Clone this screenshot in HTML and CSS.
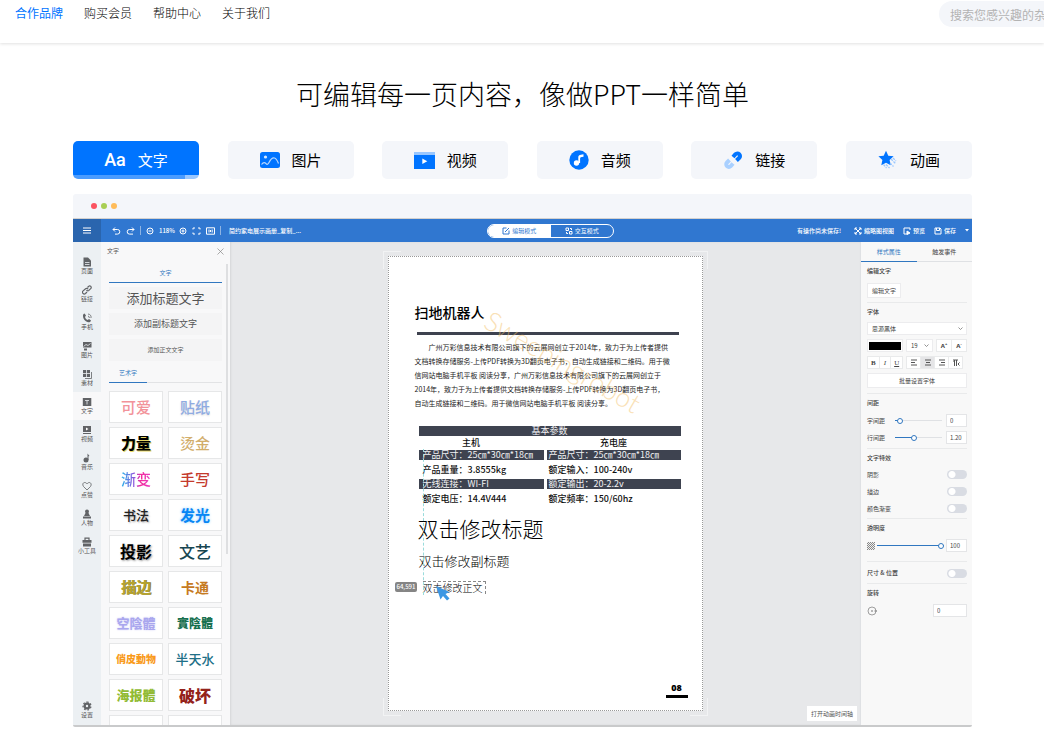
FILE: index.html
```html
<!DOCTYPE html>
<html lang="zh-CN">
<head>
<meta charset="utf-8">
<title>可编辑每一页内容</title>
<link rel="stylesheet" href="styles.css">
</head>
<body>
<header class="site-header">
  <nav class="site-nav">
    <a class="current" href="#">合作品牌</a>
    <a href="#">购买会员</a>
    <a href="#">帮助中心</a>
    <a href="#">关于我们</a>
  </nav>
  <input class="search" type="search" aria-label="搜索" placeholder="搜索您感兴趣的杂志">
</header>

<main class="feature">
  <h1>可编辑每一页内容，像做PPT一样简单</h1>

  <div class="tabs">
    <button class="tab active" type="button"><span class="aa">Aa</span>文字</button>
    <button class="tab" type="button">
      <svg width="20" height="16" viewBox="0 0 20 16"><rect width="20" height="16" rx="2.5" fill="#0074ff"/><circle cx="5.500" cy="5" r="1.600" fill="#d5e8ff"/><path d="M1.500 12.500c2-2.500 3.500-2 4.500-.8s2 .8 3-1.200c2-4 3.500-5 5.500-4.500s3 3 4 5.500" fill="none" stroke="#b5d7ff" stroke-width="1.200"/></svg>图片</button>
    <button class="tab" type="button">
      <svg width="21" height="17" viewBox="0 0 21 17"><path fill="#0074ff" d="M0 3h21v14H0z"/><path fill="#99c7ff" d="M0 0h21v3H0z"/><path fill="#fff" d="M8.300 6.500l5 2.800-5 2.800z"/></svg>视频</button>
    <button class="tab" type="button">
      <svg width="20" height="20" viewBox="0 0 20 20"><circle cx="10" cy="10" r="9.700" fill="#0074ff"/><circle cx="7.500" cy="13" r="2.700" fill="#fff"/><path d="M9.300 13V7.500c0-2 1-2.700 5.200-3.300v2.600c-2.500.2-3.400.6-3.400 1.700V13z" fill="#fff"/></svg>音频</button>
    <button class="tab" type="button">
      <svg width="20" height="20" viewBox="0 0 20 20"><g fill="none" stroke-width="4"><path d="M10 7l2.500-2.800a2.500 2.500 0 0 1 3.800 3.600L13.500 10.500" stroke="#0074ff"/><path d="M6.500 10L4 12.500a2.500 2.500 0 0 0 3.700 3.700L10 13.500" stroke="#a9d0ff"/></g></svg>链接</button>
    <button class="tab" type="button">
      <svg width="20" height="20" viewBox="0 0 20 20"><path fill="#0074ff" d="M8 .8l2.300 4.900 5.300.6-4 3.700 1.100 5.300L8 12.700l-4.700 2.600L4.400 10l-4-3.700 5.300-.6z"/><path d="M13 9l4.500 4.500M15 8l3 3M8 14.500l3.500 3.500M5.500 14.500l3 3.500M12 13l3.500 3.500" stroke="#99c7ff" stroke-width="1.200" stroke-dasharray="2.500 1"/></svg>动画</button>
  </div>

  <section class="editor">
    <div class="window-bar"><i class="red"></i><i class="green"></i><i class="amber"></i></div>

    <div class="toolbar">
      <button class="menu" type="button" aria-label="菜单"><svg width="8" height="7" viewBox="0 0 8 7"><path d="M0 1h8M0 3.500h8M0 6h8" stroke="#fff"/></svg></button>
      <div class="tools">
        <svg width="9" height="8" viewBox="0 0 9 8"><path d="M3 .5L1 2.500l2 2M1 2.500h4.500a2.300 2.300 0 0 1 0 4.600H3"/></svg>
        <svg width="9" height="8" viewBox="0 0 9 8"><path d="M6 .5l2 2-2 2M8 2.500H3.500a2.300 2.300 0 0 0 0 4.600H7"/></svg>
        <span class="sep"></span>
        <svg width="8" height="8" viewBox="0 0 8 8"><circle cx="4" cy="4" r="3"/><path d="M2.500 4h3"/></svg>
        <span class="zoom">118%</span>
        <svg width="8" height="8" viewBox="0 0 8 8"><circle cx="4" cy="4" r="3"/><path d="M2.500 4h3M4 2.500v3"/></svg>
        <svg width="9" height="8" viewBox="0 0 9 8"><path d="M1 2.500V1h2M6 1h2v1.500M8 5.500V7H6M3 7H1V5.500"/></svg>
        <svg width="9" height="8" viewBox="0 0 9 8"><path d="M.5.800h8v6.400h-8zM3 2.500v3M4.500 3v2M6.200 2.500v3"/></svg>
        <span class="sep"></span>
        <span class="file">简约家电展示画册_复制_...</span>
      </div>
      <div class="modes">
        <button class="mode on" type="button"><svg width="8" height="8" viewBox="0 0 8 8"><path d="M4.500 1H1v6h6V3.500M3 5l4-4"/></svg>编辑模式</button>
        <button class="mode" type="button"><svg width="8" height="8" viewBox="0 0 8 8"><path d="M1 1h2.500v2.500H1zM4.500 4.500H7V7H4.500zM5 1.500h1.500V3M1.500 5v1.500H3"/></svg>交互模式</button>
      </div>
      <div class="actions">
        <span class="unsaved">有操作尚未保存!</span>
        <button type="button"><svg width="8" height="8" viewBox="0 0 8 8"><path d="M1 3V1h2M5 1h2v2M7 5v2H5M3 7H1V5M1 1l6 6M7 1L1 7"/></svg>缩略图视图</button>
        <button type="button"><svg width="8" height="8" viewBox="0 0 8 8"><path d="M4 7H1V1h6v2"/><path d="M4 4l3 2-3 1.500z" fill="#fff"/></svg>预览</button>
        <button type="button"><svg width="8" height="8" viewBox="0 0 8 8"><path d="M1 1h5l1 1v5H1zM2.500 1v2.500h3V1"/></svg>保存</button>
        <svg class="caret" width="4" height="3" viewBox="0 0 4 3"><path d="M0 0h4L2 2.500z"/></svg>
      </div>
    </div>

    <div class="workspace">
      <nav class="rail">
        <a href="#"><svg viewBox="0 0 10 10"><path d="M1.500.5H6L9 3.500v6H1.500z"/><path class="cut" d="M3 5.500h4.500M3 7.500h4.500"/></svg>页面</a>
        <a href="#"><svg viewBox="0 0 10 10"><path class="line" d="M5 7L3.500 8.500a1.700 1.700 0 0 1-2.400-2.600l2.500-2.200c.8-.7 2-.5 2.500.5M4.500 5c.6 1 1.700 1 2.400.4l2-2A1.500 1.500 0 0 0 6.500 1.500L5.500 2.500"/></svg>链接</a>
        <a href="#"><svg viewBox="0 0 10 10"><path d="M2.500.5l1.500 2-1 1.500c.5 1.500 1.300 2.500 2.700 3L7 6l2 1.500c-.3 1.500-1.500 2-3 1.700C3 8.500.8 5.500 1 2.500c0-1 .7-1.800 1.500-2z"/><path class="line thin" d="M6 1a3.500 3.500 0 0 1 3 4M6 3a1.800 1.800 0 0 1 1.300 2"/></svg>手机</a>
        <a href="#"><svg viewBox="0 0 10 10"><path d="M1 1h8.500v5.500H1zM2 7.500h3v2H2z"/><path class="cut" d="M1.500 5.500L4 3.500l2 1 2.500-2"/></svg>图片</a>
        <a href="#"><svg viewBox="0 0 10 10"><path d="M1 1h7v7H1z"/><path class="cut" d="M4.500 1v7M1 4.500h7"/><path class="line thin" d="M9.500 3v6.500H3"/></svg>素材</a>
        <a class="active" href="#"><svg viewBox="0 0 10 10"><path d="M.8 1h8.500v8H.8z"/><path class="cut" d="M3 3.500h4M5 3.500v4"/></svg>文字</a>
        <a href="#"><svg viewBox="0 0 10 10"><path d="M1 1h8v6H1zM1 8h8v1H1z"/><path fill="#fff" d="M4 2.500L6.500 4 4 5.500z"/></svg>视频</a>
        <a href="#"><svg viewBox="0 0 10 10"><circle cx="4" cy="7" r="2.500"/><path d="M5.500 7V.5l2 2.500-1 .2V7z"/></svg>音乐</a>
        <a href="#"><svg viewBox="0 0 10 10"><path class="line thin" d="M5 9L1.500 5.500C0 3.500 1 1.500 2.700 1.500S5 3 5 3s.8-1.500 2.300-1.500S10 3.500 8.500 5.500z"/></svg>点赞</a>
        <a href="#"><svg viewBox="0 0 10 10"><circle cx="5" cy="2.500" r="2"/><path d="M3.500 4h3L8 7H2zM1 7.500h8v2H1z"/></svg>人物</a>
        <a href="#"><svg viewBox="0 0 10 10"><path d="M.5 3h9v2.700h-9zM1 6.500h8v3H1z"/><path class="line" d="M3 3V1.200h4V3"/></svg>小工具</a>
        <a class="settings" href="#"><svg viewBox="0 0 10 10"><circle cx="5" cy="5" r="3.500"/><path class="line" stroke-dasharray="1.700 1.700" stroke-width="2" d="M5 1a4 4 0 1 1 0 8 4 4 0 1 1 0-8"/><circle cx="5" cy="5" r="1.200" fill="#ecf0f3"/></svg>设置</a>
      </nav>

      <aside class="text-panel">
        <div class="panel-head">文字<button type="button" aria-label="关闭"><svg width="7" height="7" viewBox="0 0 7 7"><path d="M.5.500l6 6M6.500.500l-6 6" stroke="#888" stroke-width=".7"/></svg></button></div>
        <div class="panel-scroll">
          <h2 class="panel-tab">文字</h2>
          <button class="add title" type="button">添加标题文字</button>
          <button class="add subtitle" type="button">添加副标题文字</button>
          <button class="add body" type="button">添加正文文字</button>
          <h2 class="art-tab"><span>艺术字</span></h2>
          <div class="art-grid">
            <button class="pink" type="button">可爱</button><button class="sticker" type="button">贴纸</button>
            <button class="power" type="button">力量</button><button class="gold" type="button">烫金</button>
            <button class="gradient" type="button"><span>渐变</span></button><button class="hand" type="button">手写</button>
            <button class="brush" type="button">书法</button><button class="glow" type="button">发光</button>
            <button class="shadow" type="button">投影</button><button class="literary" type="button">文艺</button>
            <button class="outline" type="button">描边</button><button class="cartoon" type="button">卡通</button>
            <button class="hollow" type="button">空陰體</button><button class="solid" type="button">實陰體</button>
            <button class="animal" type="button">俏皮動物</button><button class="water" type="button">半天水</button>
            <button class="poster" type="button">海报體</button><button class="broken" type="button">破坏</button>
            <button class="ice" type="button">冰雪體</button><button class="wood" type="button">古木體</button>
          </div>
        </div>
      </aside>

      <div class="canvas">
        <div class="page-frame">
          <i class="corner tl"></i><i class="corner tr"></i><i class="corner bl"></i><i class="corner br"></i>
          <article class="page">
            <h2 class="doc-title">扫地机器人</h2>
            <hr class="rule">
            <p class="doc-text"><span class="indent">广州万彩信息技术有限公司旗下的云展网创立于2014年，致力于为上传者提供</span><br>文档转换存储服务-上传PDF转换为3D翻页电子书，自动生成链接和二维码。用于微<br>信网站电脑手机平板 阅读分享，广州万彩信息技术有限公司旗下的云展网创立于<br>2014年，致力于为上传者提供文档转换存储服务-上传PDF转换为3D翻页电子书，<br>自动生成链接和二维码。用于微信网站电脑手机平板 阅读分享。</p>
            <table class="specs">
              <colgroup><col class="host"><col class="gap"><col></colgroup>
              <thead><tr class="dark"><th colspan="3">基本参数</th></tr>
              <tr class="heads"><th>主机</th><td class="gutter"></td><th>充电座</th></tr></thead>
              <tbody>
              <tr class="dark"><td>产品尺寸：25㎝*30㎝*18㎝</td><td class="gutter"></td><td>产品尺寸：25㎝*30㎝*18㎝</td></tr>
              <tr class="plain"><td>产品重量：3.8555kg</td><td class="gutter"></td><td>额定输入：100-240v</td></tr>
              <tr class="dark"><td>无线连接：WI-FI</td><td class="gutter"></td><td>额定输出：20-2.2v</td></tr>
              <tr class="plain"><td>额定电压：14.4V444</td><td class="gutter"></td><td>额定频率：150/60hz</td></tr>
              </tbody>
            </table>
            <p class="new-title">双击修改标题</p>
            <p class="new-subtitle">双击修改副标题</p>
            <p class="new-body">双击修改正文</p>
            <div class="folio">08</div>
            <span class="watermark">Sweepingrobot</span>
            <i class="guide"></i>
            <span class="coords">64,591</span>
            <svg class="cursor" width="15" height="16" viewBox="0 0 15 16"><path fill="#3d97e3" d="M0 0l13.500 6-4 2 4 4.500-2.500 2-4-4.500-2.500 3.500z"/></svg>
          </article>
        </div>
        <button class="timeline" type="button">打开动画时间轴</button>
      </div>

      <aside class="props">
        <div class="prop-tabs"><button class="on" type="button">样式属性</button><button type="button">触发事件</button></div>
        <section class="group">
          <h3>编辑文字</h3>
          <button class="edit-text" type="button">编辑文字</button>
        </section>
        <section class="group type">
          <h3>字体</h3>
          <div class="stack">
            <select aria-label="字体"><option>思源黑体</option></select>
            <div class="row"><button class="swatch" type="button" aria-label="颜色"><i></i></button>
              <select class="size" aria-label="字号"><option>19</option></select>
              <div class="set two"><button type="button">A<sup>+</sup></button><button type="button">A<sup>-</sup></button></div></div>
            <div class="row"><div class="set biu"><button type="button"><b>B</b></button><button type="button"><em>I</em></button><button type="button"><u>U</u></button></div>
              <div class="set align">
                <button type="button" aria-label="左对齐"><svg width="6" height="7" viewBox="0 0 6 7"><path d="M0 1h6M0 3.500h4M0 6h6"/></svg></button>
                <button class="on" type="button" aria-label="居中"><svg width="6" height="7" viewBox="0 0 6 7"><path d="M0 1h6M1 3.500h4M0 6h6"/></svg></button>
                <button type="button" aria-label="右对齐"><svg width="6" height="7" viewBox="0 0 6 7"><path d="M0 1h6M2 3.500h4M0 6h6"/></svg></button>
                <button type="button" aria-label="段落"><svg width="8" height="7" viewBox="0 0 8 7"><path d="M2.500 1v6M4.500 1v6M1 1h5M1.500 2.500h1M7.500 3.500L6 5l1.500 1.500"/></svg></button></div></div>
            <button class="batch" type="button">批量设置字体</button>
          </div>
        </section>
        <section class="group">
          <h3>间距</h3>
          <div class="field"><label for="letter">字间距</label><input class="range r10" id="letter" type="range" value="5"><input type="text" aria-label="字间距数值" value="0"></div>
          <div class="field"><label for="leading">行间距</label><input class="range r40" id="leading" type="range" value="38"><input type="text" aria-label="行间距数值" value="1.20"></div>
        </section>
        <section class="group effects">
          <h3>文字特效</h3>
          <label class="switch">阴影<input type="checkbox"></label>
          <label class="switch">描边<input type="checkbox"></label>
          <label class="switch">颜色渐变<input type="checkbox"></label>
        </section>
        <section class="group opacity">
          <h3>透明度</h3>
          <div class="field"><i class="checker"></i><input class="range r100" type="range" aria-label="透明度" value="100"><input type="text" aria-label="透明度数值" value="100"></div>
        </section>
        <section class="group">
          <label class="switch strong">尺寸 &amp; 位置<input type="checkbox"></label>
        </section>
        <section class="group">
          <h3>旋转</h3>
          <div class="rotate"><svg width="10" height="10" viewBox="0 0 10 10"><circle cx="5" cy="5" r="4" fill="none" stroke="#888" stroke-width=".8"/><path d="M4 4.500h2v1H4zM7.500 4.500h2.500v1H7.500z" fill="#777"/></svg><input type="text" aria-label="旋转角度" value="0"></div>
        </section>
      </aside>
    </div>
  </section>
</main>
</body>
</html>
```
FILE: styles.css
```css
* { box-sizing: border-box; }
body {
  margin: 0;
  background: #fff;
  color: #333;
  font: 12px/16px "Noto Sans CJK SC", sans-serif;
}
button, input, select { font: inherit; color: inherit; margin: 0; }
button { border: 0; padding: 0; background: none; white-space: nowrap; }
a { color: inherit; text-decoration: none; }
h1, h2, h3, p { margin: 0; font-weight: 400; }
svg { display: block; flex: none; }

/* Header */
.site-header {
  display: grid;
  grid-template-columns: 1fr 105px;
  height: 43px;
  overflow-x: clip;
  box-shadow: 0 1px 3px rgba(0, 0, 0, .12);
}
.site-nav { display: flex; gap: 21px; padding: 5px 15px; font-weight: 300; color: #000; }
.site-nav .current { color: #0074ff; font-weight: 400; }
.search {
  width: 220px;
  height: 26px;
  margin-top: 1px;
  padding: 0 11px;
  border: 0;
  border-radius: 13px;
  background: #f4f6fa;
}
.search::placeholder { color: #b3b3b3; }

/* Feature */
.feature { padding: 0 72px 0 73px; }
h1 {
  padding: 31px 0 27px;
  font-size: 27px;
  line-height: 40px;
  font-weight: 300;
  color: #000;
  text-align: center;
}
.tabs { display: flex; justify-content: space-between; }
.tab {
  display: flex;
  align-items: center;
  justify-content: center;
  gap: 12px;
  width: 126px;
  height: 38px;
  border-radius: 5px;
  background: #f4f6fa;
  color: #000;
  font-size: 15px;
}
.tab.active {
  color: #fff;
  background: linear-gradient(90deg, #4a9cff 112px, #99c7ff 112px) bottom / 100% 4px no-repeat #0074ff;
}
.aa { font: 500 18px/20px Roboto, sans-serif; }

/* Editor window */
.editor {
  margin-top: 15px;
  border-bottom: 2px solid #c9cacb;
  border-radius: 3px 3px 2px 2px;
  overflow: hidden;
  font-size: 6px;
  line-height: 8px;
}
.window-bar { display: flex; align-items: center; gap: 4px; height: 25px; padding-left: 18px; background: #f4f6fa; border-bottom: 1px solid #d3d1cf; }
.window-bar i { width: 6px; height: 6px; border-radius: 50%; }
.red { background: #fb5361; }
.green { background: #a9cf54; }
.amber { background: #ffbc5a; }

.toolbar {
  display: grid;
  grid-template-columns: 28px 386px 127px 1fr;
  align-items: center;
  height: 23px;
  background: #3077d0;
  color: #fff;
}
.toolbar svg { fill: none; stroke: currentColor; stroke-width: 1; }
.toolbar .caret { fill: #fff; stroke: none; }
.menu { display: grid; place-items: center; height: 23px; background: #2a65ae; }
.tools { display: flex; align-items: center; gap: 5px; padding-left: 11px; }
.sep { width: 1px; height: 9px; background: #8fb4e2; }
.zoom { width: 15px; font-weight: 500; }
.file { margin-left: 3px; font-weight: 500; }
.modes { display: grid; grid-template-columns: 1fr 1fr; height: 14px; border: 1px solid #fff; border-radius: 7px; overflow: hidden; }
.mode { display: flex; align-items: center; justify-content: center; gap: 2px; }
.mode.on { background: #fff; color: #3077d0; }
.actions { display: flex; align-items: center; justify-content: flex-end; gap: 9px; padding-right: 3px; font-weight: 500; }
.actions button { display: flex; align-items: center; gap: 2px; }
.unsaved { margin-right: 4px; }

.workspace { display: grid; grid-template-columns: 28px 129px 1fr 112px; background: #e7e8ea; }

/* Icon rail */
.rail { display: flex; flex-direction: column; padding: 10px 0 1px; background: #ecf0f3; color: #555; }
.rail a { display: flex; flex-direction: column; align-items: center; height: 28px; padding-top: 5px; }
.rail svg { width: 10px; height: 10px; fill: #616366; }
.rail .line { fill: none; stroke: #616366; stroke-width: 1.2; }
.rail .thin { stroke-width: .8; }
.rail .cut { fill: none; stroke: #ecf0f3; stroke-width: .8; }
.rail .active { background: #f8f8f9; }
.rail .settings { margin-top: auto; }

/* Text panel */
.text-panel { contain: size; overflow: hidden; background: #f8f8f9; color: #555; }
.panel-head { display: flex; align-items: center; justify-content: space-between; height: 18px; padding: 0 6px; }
.panel-scroll {
  padding: 0 8px;
  background: linear-gradient(#dedfe1, #dedfe1) right 2px top 4px / 2px 290px no-repeat;
}
.panel-tab { height: 23px; padding-top: 9px; border-bottom: 1px solid #3077c0; font-size: 6px; text-align: center; color: #3077c0; }
.add { display: block; width: 100%; height: 22px; margin-top: 4px; background: #f4f4f5; }
.add.title { font-size: 13px; line-height: 22px; }
.add.subtitle { font-size: 9px; line-height: 22px; }
.add.body { font-size: 6px; }
.art-tab { margin-top: 3px; border-bottom: 1px solid #e2e3e5; font-size: 6px; color: #3077c0; }
.art-tab span { display: block; width: 38px; margin-bottom: -1px; padding: 5px 0; border-bottom: 1px solid #3077c0; text-align: center; }
.art-grid { display: grid; grid-template-columns: 1fr 1fr; gap: 4px 5px; padding-top: 8px; }
.art-grid button { height: 32px; overflow: hidden; border: 1px solid #e6e7e8; background: #fff; font-size: 15px; line-height: 28px; font-weight: 500; }
.art-grid .pink { color: #f2939a; }
.art-grid .sticker { color: #8fabe2; text-shadow: 0 1px 2px #ddd; }
.art-grid .power { color: #000; font-weight: 900; text-shadow: 1px 1px #e8d864; }
.art-grid .gold { color: #d2ae6c; }
.gradient span { background: linear-gradient(90deg, #21b5ea, #9250dc 45%, #f32b9b 65%, #e83cc5); background-clip: text; color: transparent; }
.art-grid .hand { color: #c43a2c; }
.art-grid .brush { color: #222; font-size: 13px; text-shadow: 1px 1px 2px #aaa; }
.art-grid .glow { color: #0786f4; font-weight: 700; text-shadow: 0 0 3px #8fd0ff; }
.art-grid .shadow { color: #000; font-size: 16px; font-weight: 700; text-shadow: 1px 1px 2px #999; }
.art-grid .literary { color: #174651; font-size: 16px; }
.art-grid .outline { color: #b5a32f; font-weight: 700; text-shadow: 1px 0 #8a8035; }
.art-grid .cartoon { color: #c67a22; font-size: 14px; font-weight: 700; }
.art-grid .hollow { color: #a9a6ee; font-size: 13px; font-weight: 700; text-shadow: 0 0 2px #c9c8f5; }
.art-grid .solid { color: #17704f; font-size: 12px; font-weight: 900; }
.art-grid .animal { color: #f99b1c; font-size: 10px; font-weight: 900; }
.art-grid .water { color: #206f87; font-size: 13px; font-weight: 500; }
.art-grid .poster { color: #92bb35; font-size: 13px; font-weight: 900; }
.art-grid .broken { color: #94221b; font-size: 16px; font-weight: 900; }
.art-grid .ice, .art-grid .wood { font-size: 12px; }
.art-grid .ice { color: #6dbbd2; }
.art-grid .wood { color: #a58a55; }

/* Canvas */
.canvas { position: relative; display: flex; justify-content: center; align-items: flex-start; padding: 9px 0; box-shadow: inset 1px 0 2px rgba(0, 0, 0, .08); }
.page-frame { position: relative; padding: 5px; }
.corner { position: absolute; width: 18px; height: 18px; border: 0 solid #f2f3f4; }
.tl { top: 0; left: 0; border-width: 1px 0 0 1px; }
.tr { top: 0; right: 0; border-width: 1px 1px 0 0; }
.bl { bottom: 0; left: 0; border-width: 0 0 1px 1px; }
.br { bottom: 0; right: 0; border-width: 0 1px 1px 0; }
.page {
  position: relative;
  display: flex;
  flex-direction: column;
  width: 315px;
  min-height: 455px;
  padding: 45px 14px 12px 26px;
  border: 1px dotted #999;
  background: #fff;
  color: #111;
}
.doc-title { font-size: 14px; line-height: 20px; font-weight: 500; color: #000; }
.rule { width: 262px; height: 3px; margin: 10px 0 5px 2px; border: 0; background: #3e424f; }
.doc-text { font-size: 7px; line-height: 14px; color: #222; white-space: nowrap; }
.indent { padding-left: 14px; }
.specs { width: 262px; margin: 16px 0 0 4px; border-collapse: collapse; table-layout: fixed; font-size: 9px; line-height: 10px; color: #111; }
.host { width: 125px; }
.gap { width: 3px; }
.specs th, .specs td { padding: 0 0 0 4px; height: 10px; text-align: left; font-weight: 500; white-space: nowrap; }
.specs th { text-align: center; padding: 0; }
.specs .dark th, .specs .dark td { background: #3e4350; color: #f2f2f4; font-weight: 400; }
.specs td.gutter, .specs .dark td.gutter { padding: 0; background: none; }
.specs .heads th { height: 14px; }
.specs .heads th:first-child { padding-right: 20px; }
.specs .plain td { height: 19px; }
.specs td:last-child { padding-left: 2px; }
.new-title { margin: 5px 0 0 3px; font-size: 21px; line-height: 30px; font-weight: 300; color: #000; }
.new-subtitle { margin: 8px 0 0 4px; font-size: 13px; line-height: 20px; font-weight: 300; color: #000; }
.new-body { align-self: flex-start; margin: 10px 0 0 8px; border: 1px dashed #888; border-width: 1px 1px 0 0; padding-right: 2px; font-size: 10px; line-height: 12px; font-weight: 300; color: #000; }
.folio { align-self: flex-end; width: 22px; margin-top: auto; border-bottom: 3px solid #000; font: 900 9px/14px "Open Sans", sans-serif; text-align: center; color: #000; }
.watermark { position: absolute; left: 98px; top: 46px; font: 300 27px/30px Lato, sans-serif; color: rgba(244, 195, 110, .5); transform: rotate(30deg); transform-origin: 0 50%; }
.guide { position: absolute; left: 34px; top: 192px; height: 146px; border-left: 1px dashed #9adcdc; }
.coords { position: absolute; left: 6px; top: 325px; padding: 1px 2px; border-radius: 2px; background: #858585; color: #fff; font-weight: 500; }
.cursor { position: absolute; left: 47px; top: 329px; }
.timeline { position: absolute; right: 3px; bottom: 4px; padding: 3px 4px; height: 15px; background: #fff; color: #555; line-height: 8px; }

/* Properties */
.props { border-left: 1px solid #dfe1e4; background: #f8f8f8; color: #444; }
.prop-tabs { display: grid; grid-template-columns: 1fr 1fr; height: 20px; border-bottom: 1px solid #dfe1e4; font-size: 6px; }
.prop-tabs .on { margin-bottom: -1px; border-bottom: 1px solid #3077c0; color: #3077c0; }
.group { margin: 0 5px 0 6px; padding: 5px 0 4px; border-bottom: 1px solid #e9eaeb; }
.group:last-child { border: 0; }
.group.type { padding-bottom: 5px; }
.group.effects { padding-bottom: 1px; }
.group h3 { font-size: 6px; line-height: 8px; font-weight: 500; }
.edit-text { width: 34px; height: 15px; margin-top: 8px; background: #fff; border: 1px solid #ececee; }
.stack { display: grid; gap: 4px; padding-top: 6px; }
.stack select {
  appearance: none;
  height: 13px;
  padding: 0 6px 0 4px;
  border: 1px solid #ececee;
  border-radius: 0;
  background: #fff url("data:image/svg+xml,%3Csvg xmlns='http://www.w3.org/2000/svg' width='5' height='3'%3E%3Cpath d='M.5.5l2 2 2-2' fill='none' stroke='%23777' stroke-width='.8'/%3E%3C/svg%3E") right 3px center no-repeat;
  font-size: 6px;
  line-height: 8px;
}
.row { display: flex; gap: 3px; }
.swatch { width: 36px; height: 13px; padding: 1px; background: #fff; border: 1px solid #ececee; }
.swatch i { display: block; height: 8px; background: #000; }
.stack .size { width: 27px; }
.set { display: grid; grid-auto-flow: column; grid-auto-columns: 1fr; gap: 1px; height: 13px; background: #e9eaeb; border: 1px solid #e9eaeb; }
.set button { display: grid; place-items: center; background: #fff; }
.set svg { fill: none; stroke: #555; stroke-width: 1; }
.set .on { background: #e5e5e7; }
.two { flex: 1; }
.two button { display: block; font: 700 6px/10px "Noto Sans", sans-serif; }
.two sup { font-size: 4px; line-height: 0; }
.biu { width: 36px; font: 7px/10px "Liberation Serif", serif; }
.align { width: 57px; }
.batch { height: 15px; background: #fff; border: 1px solid #ececee; }
.field { display: grid; grid-template-columns: 24px 1fr 21px; align-items: center; column-gap: 4px; padding-top: 4px; }
.group h3 + .field { padding-top: 7px; }
.field input[type="text"], .rotate input { width: 100%; height: 13px; padding: 0 3px; border: 1px solid #e4e5e7; background: #fff; }
.range { appearance: none; width: 100%; min-width: 0; height: 8px; background: linear-gradient(#3077c0, #3077c0) left center / 100% 1px no-repeat, linear-gradient(#dfe1e4, #dfe1e4) center / 100% 1px no-repeat; }
.range.r10 { background-size: 10% 1px, 100% 1px; }
.range.r40 { background-size: 40% 1px, 100% 1px; }
.range::-webkit-slider-thumb { appearance: none; width: 6px; height: 6px; border: 1px solid #3077c0; border-radius: 50%; background: #fff; }
.switch { display: flex; align-items: center; justify-content: space-between; height: 17px; }
.group h3 + .switch { margin-top: 4px; }
.switch input { appearance: none; width: 20px; height: 9px; border-radius: 5px; background: radial-gradient(circle at 5px 50%, #fff 3px, transparent 4px) #d9dce3; }
.strong { height: 12px; font-weight: 500; }
.opacity { padding-bottom: 9px; }
.opacity .field { grid-template-columns: 8px 1fr 21px; column-gap: 2px; }
.checker { height: 8px; background: repeating-conic-gradient(#888 0 25%, #eee 0 50%) 0 0 / 2px 2px; }
.rotate { display: flex; align-items: center; justify-content: space-between; padding-top: 7px; }
.rotate input { width: 34px; }
```
